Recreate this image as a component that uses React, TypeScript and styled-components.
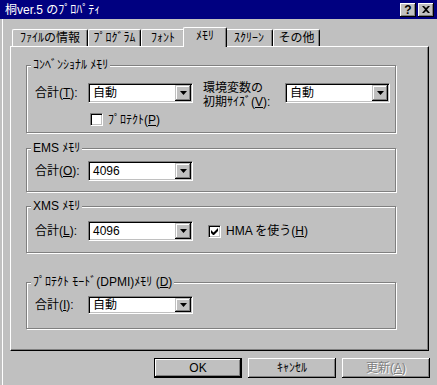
import React from "react";
import styled, { createGlobalStyle } from "styled-components";

const Global = createGlobalStyle`
  html, body { margin: 0; padding: 0; background: #c0c0c0; }
  body { font-family: "Liberation Sans", "Noto Sans CJK JP", sans-serif; font-size: 12px; }
`;

const FONT = `"Liberation Sans", "Noto Sans CJK JP", sans-serif`;

const Window = styled.div`
  width: 437px;
  height: 385px;
  background: #c0c0c0;
  overflow: hidden;
  display: flex;
  flex-direction: column;
  color: #000;
  font-family: ${FONT};
  font-size: 12px;
  line-height: 14px;
`;

const TitleBar = styled.div`
  height: 19px;
  flex-shrink: 0;
  box-sizing: border-box;
  background: #000080;
  color: #fff;
  display: flex;
  align-items: center;
  padding: 0 3px 0 5px;
`;

const Title = styled.div`
  flex: 1;
  white-space: pre;
`;

const CapButton = styled.div`
  width: 16px;
  height: 14px;
  margin-left: 2px;
  box-sizing: border-box;
  background: #c0c0c0;
  color: #000;
  display: flex;
  align-items: center;
  justify-content: center;
  font-weight: bold;
  font-size: 12px;
  box-shadow: inset -1px -1px 0 #000, inset 1px 1px 0 #fff, inset -2px -2px 0 #808080;
`;

const Body = styled.div`
  flex: 1;
  margin-left: 2px;
  border-left: 1px solid #fff;
  padding: 8px 7px 0 7px;
  display: flex;
  flex-direction: column;
`;

const TabRow = styled.div`
  height: 19px;
  display: flex;
  align-items: flex-end;
  padding-left: 2px;
`;

const Tab = styled.div<{ $w: number; $active?: boolean }>`
  width: ${(p) => p.$w}px;
  height: ${(p) => (p.$active ? 20 : 17)}px;
  margin: ${(p) => (p.$active ? "0 -2px -1px -2px" : "0")};
  position: relative;
  z-index: ${(p) => (p.$active ? 2 : 1)};
  box-sizing: border-box;
  background: #c0c0c0;
  border-top: 1px solid #fff;
  border-left: 1px solid #fff;
  border-right: 1px solid #000;
  border-radius: 2px 2px 0 0;
  box-shadow: inset -1px 0 0 #808080;
  display: flex;
  align-items: center;
  justify-content: center;
  padding-bottom: ${(p) => (p.$active ? 3 : 0)}px;
  white-space: pre;
`;

const Panel = styled.div`
  width: 419px;
  height: 305px;
  box-sizing: border-box;
  border-top: 1px solid #fff;
  border-left: 1px solid #fff;
  border-right: 1px solid #000;
  border-bottom: 1px solid #000;
  box-shadow: inset -1px -1px 0 #808080;
  padding-left: 15px;
  display: flex;
  flex-direction: column;
`;

const Group = styled.div<{ $h: number; $mt: number }>`
  width: 370px;
  height: ${(p) => p.$h}px;
  margin-top: ${(p) => p.$mt}px;
  box-sizing: border-box;
  border: 1px solid #808080;
  box-shadow: inset 1px 1px 0 #fff, 1px 1px 0 #fff;
  padding-left: 8px;
  display: flex;
  flex-direction: column;
`;

const Legend = styled.div`
  width: fit-content;
  height: 14px;
  margin: -8px 0 0 -4px;
  padding: 0 2px;
  background: #c0c0c0;
  white-space: pre;
`;

const Row = styled.div<{ $mt: number; $h?: number }>`
  display: flex;
  align-items: center;
  margin-top: ${(p) => p.$mt}px;
  height: ${(p) => p.$h ?? 20}px;
`;

const Label = styled.div<{ $w: number }>`
  width: ${(p) => p.$w}px;
  flex-shrink: 0;
  white-space: pre;
`;

const TwoLineLabel = styled.div<{ $w: number }>`
  width: ${(p) => p.$w}px;
  flex-shrink: 0;
  align-self: flex-start;
  margin-top: -2px;
  display: flex;
  flex-direction: column;
`;

const LabelLine = styled.div`
  height: 14px;
  line-height: 14px;
  white-space: pre;
`;

const Spacer = styled.div<{ $w: number }>`
  width: ${(p) => p.$w}px;
  flex-shrink: 0;
`;

const Combo = styled.div<{ $w: number; $h?: number }>`
  width: ${(p) => p.$w}px;
  height: ${(p) => p.$h ?? 20}px;
  flex-shrink: 0;
  box-sizing: border-box;
  background: #fff;
  border-top: 1px solid #808080;
  border-left: 1px solid #808080;
  border-right: 1px solid #fff;
  border-bottom: 1px solid #fff;
  box-shadow: inset 1px 1px 0 #000, inset -1px -1px 0 #c0c0c0;
  padding: 1px;
  display: flex;
`;

const ComboText = styled.div`
  flex: 1;
  padding-left: 3px;
  display: flex;
  align-items: center;
  white-space: pre;
`;

const DropButton = styled.div`
  width: 16px;
  box-sizing: border-box;
  background: #c0c0c0;
  box-shadow: inset -1px -1px 0 #000, inset 1px 1px 0 #c0c0c0, inset -2px -2px 0 #808080,
    inset 2px 2px 0 #fff;
  display: flex;
  align-items: center;
  justify-content: center;
`;

const CheckBox = styled.div`
  width: 13px;
  height: 13px;
  flex-shrink: 0;
  box-sizing: border-box;
  background: #fff;
  border-top: 1px solid #808080;
  border-left: 1px solid #808080;
  border-right: 1px solid #fff;
  border-bottom: 1px solid #fff;
  box-shadow: inset 1px 1px 0 #000, inset -1px -1px 0 #c0c0c0;
  display: flex;
  align-items: center;
  justify-content: center;
`;

const CheckLabel = styled.div`
  margin-left: 5px;
  white-space: pre;
`;

const ButtonRow = styled.div`
  display: flex;
  justify-content: flex-end;
  gap: 6px;
  margin-top: 7px;
`;

const Button = styled.div<{ $default?: boolean; $disabled?: boolean }>`
  width: 88px;
  height: 20px;
  box-sizing: border-box;
  background: #c0c0c0;
  display: flex;
  align-items: center;
  justify-content: center;
  white-space: pre;
  border: ${(p) => (p.$default ? "1px solid #000" : "none")};
  box-shadow: inset -1px -1px 0 #000, inset 1px 1px 0 #fff, inset -2px -2px 0 #808080;
  color: ${(p) => (p.$disabled ? "#808080" : "#000")};
  text-shadow: ${(p) => (p.$disabled ? "1px 1px 0 #fff" : "none")};
`;

const Arrow = () => (
  <svg width="7" height="4" viewBox="0 0 7 4">
    <path d="M0 0h7L3.5 4z" fill="#000" />
  </svg>
);

const Check = () => (
  <svg width="7" height="7" viewBox="0 0 7 7">
    <path d="M0 2v3l2 2h1l4-4V0L2.5 4.5z" fill="#000" />
  </svg>
);

const CloseX = () => (
  <svg width="8" height="7" viewBox="0 0 8 7">
    <path d="M0 0h2l2 2 2-2h2L5 3.5 8 7H6L4 5 2 7H0l3-3.5z" fill="#000" />
  </svg>
);

const DropCombo = ({ w, h, value }: { w: number; h?: number; value: string }) => (
  <Combo $w={w} $h={h}>
    <ComboText>{value}</ComboText>
    <DropButton>
      <Arrow />
    </DropButton>
  </Combo>
);

const tabs: { label: string; w: number; active?: boolean }[] = [
  { label: "ﾌｧｲﾙの情報", w: 76 },
  { label: "ﾌﾟﾛｸﾞﾗﾑ", w: 53 },
  { label: "ﾌｫﾝﾄ", w: 44 },
  { label: "ﾒﾓﾘ", w: 44, active: true },
  { label: "ｽｸﾘｰﾝ", w: 48 },
  { label: "その他", w: 47 },
];

export default function App() {
  return (
    <>
      <Global />
      <Window>
        <TitleBar>
          <Title>桐ver.5 のﾌﾟﾛﾊﾟﾃｨ</Title>
          <CapButton>?</CapButton>
          <CapButton>
            <CloseX />
          </CapButton>
        </TitleBar>
        <Body>
          <TabRow>
            {tabs.map((t) => (
              <Tab key={t.label} $w={t.w} $active={t.active}>
                {t.label}
              </Tab>
            ))}
          </TabRow>
          <Panel>
            <Group $h={68} $mt={18}>
              <Legend>ｺﾝﾍﾞﾝｼｮﾅﾙ ﾒﾓﾘ</Legend>
              <Row $mt={11}>
                <Label $w={53}>
                  合計(<u>T</u>):
                </Label>
                <DropCombo w={105} value="自動" />
                <Spacer $w={10} />
                <TwoLineLabel $w={82}>
                  <LabelLine>環境変数の</LabelLine>
                  <LabelLine>
                    初期ｻｲｽﾞ(<u>V</u>):
                  </LabelLine>
                </TwoLineLabel>
                <DropCombo w={105} value="自動" />
              </Row>
              <Row $mt={10} $h={13}>
                <Spacer $w={55} />
                <CheckBox />
                <CheckLabel>
                  ﾌﾟﾛﾃｸﾄ(<u>P</u>)
                </CheckLabel>
              </Row>
            </Group>
            <Group $h={44} $mt={15}>
              <Legend>EMS ﾒﾓﾘ</Legend>
              <Row $mt={6}>
                <Label $w={53}>
                  合計(<u>O</u>):
                </Label>
                <DropCombo w={105} value="4096" />
              </Row>
            </Group>
            <Group $h={47} $mt={14}>
              <Legend>XMS ﾒﾓﾘ</Legend>
              <Row $mt={8}>
                <Label $w={53}>
                  合計(<u>L</u>):
                </Label>
                <DropCombo w={105} value="4096" />
                <Spacer $w={15} />
                <CheckBox>
                  <Check />
                </CheckBox>
                <CheckLabel>
                  HMA を使う(<u>H</u>)
                </CheckLabel>
              </Row>
            </Group>
            <Group $h={47} $mt={29}>
              <Legend>
                ﾌﾟﾛﾃｸﾄ ﾓｰﾄﾞ(DPMI)ﾒﾓﾘ (<u>D</u>)
              </Legend>
              <Row $mt={7} $h={18}>
                <Label $w={53}>
                  合計(<u>I</u>):
                </Label>
                <DropCombo w={105} h={18} value="自動" />
              </Row>
            </Group>
          </Panel>
          <ButtonRow>
            <Button $default>OK</Button>
            <Button>ｷｬﾝｾﾙ</Button>
            <Button $disabled>
              更新(<u>A</u>)
            </Button>
          </ButtonRow>
        </Body>
      </Window>
    </>
  );
}
